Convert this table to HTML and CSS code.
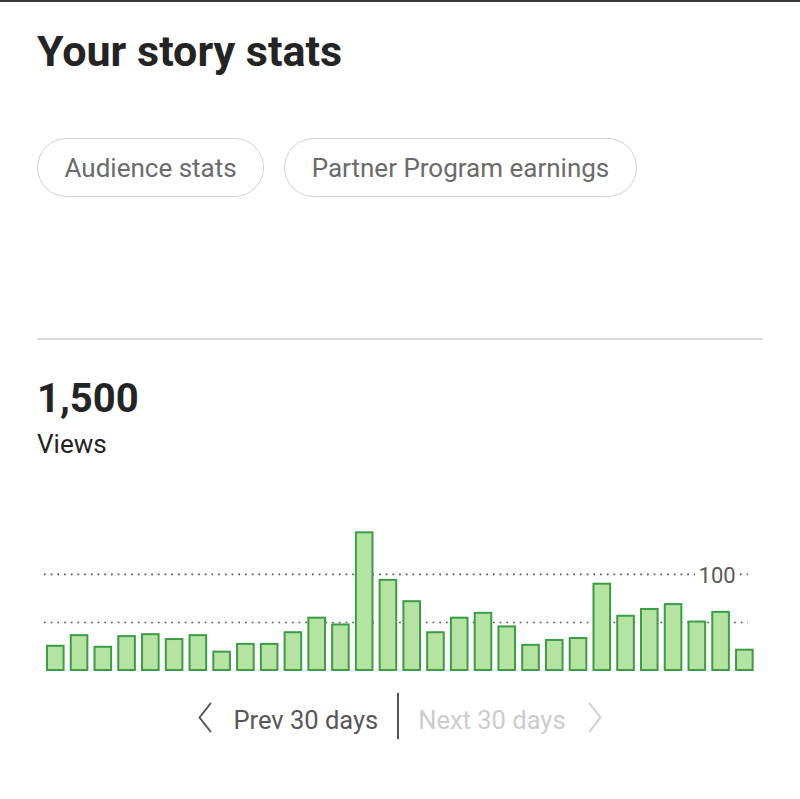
FILE: index.html
```html
<!DOCTYPE html>
<html lang="en">
<head>
<meta charset="utf-8">
<title>Your story stats</title>
<link rel="stylesheet" href="styles.css">
</head>
<body>
<div class="page">
  <h1 class="title">Your story stats</h1>
  <div class="pills">
    <button class="pill">Audience stats</button>
    <button class="pill">Partner Program earnings</button>
  </div>
  <hr class="divider">
  <div class="total">1,500</div>
  <div class="label">Views</div>
  <svg class="chart" width="726" height="156" viewBox="0 0 726 156">
    <line class="grid" x1="7" y1="102.5" x2="711" y2="102.5"/>
    <line class="grid" x1="7" y1="54.3" x2="658" y2="54.3"/>
    <line class="grid" x1="703" y1="54.3" x2="711" y2="54.3"/>
    <text class="axis-label" x="698.7" y="63.3" text-anchor="end">100</text>
    <g class="bars">
      <rect x="10" y="125.81" width="16.6" height="24.19"/>
      <rect x="33.76" y="115.14" width="16.6" height="34.86"/>
      <rect x="57.52" y="126.78" width="16.6" height="23.22"/>
      <rect x="81.28" y="116.11" width="16.6" height="33.89"/>
      <rect x="105.04" y="114.17" width="16.6" height="35.83"/>
      <rect x="128.8" y="119.02" width="16.6" height="30.98"/>
      <rect x="152.56" y="115.14" width="16.6" height="34.86"/>
      <rect x="176.32" y="131.63" width="16.6" height="18.37"/>
      <rect x="200.08" y="123.87" width="16.6" height="26.13"/>
      <rect x="223.84" y="123.87" width="16.6" height="26.13"/>
      <rect x="247.6" y="112.23" width="16.6" height="37.77"/>
      <rect x="271.36" y="97.68" width="16.6" height="52.32"/>
      <rect x="295.12" y="104.47" width="16.6" height="45.53"/>
      <rect x="318.88" y="12.32" width="16.6" height="137.68"/>
      <rect x="342.64" y="59.85" width="16.6" height="90.15"/>
      <rect x="366.4" y="81.19" width="16.6" height="68.81"/>
      <rect x="390.16" y="112.23" width="16.6" height="37.77"/>
      <rect x="413.92" y="97.68" width="16.6" height="52.32"/>
      <rect x="437.68" y="92.83" width="16.6" height="57.17"/>
      <rect x="461.44" y="106.41" width="16.6" height="43.59"/>
      <rect x="485.2" y="124.84" width="16.6" height="25.16"/>
      <rect x="508.96" y="119.99" width="16.6" height="30.01"/>
      <rect x="532.72" y="118.05" width="16.6" height="31.95"/>
      <rect x="556.48" y="63.73" width="16.6" height="86.27"/>
      <rect x="580.24" y="95.74" width="16.6" height="54.26"/>
      <rect x="604" y="88.95" width="16.6" height="61.05"/>
      <rect x="627.76" y="84.1" width="16.6" height="65.9"/>
      <rect x="651.52" y="101.56" width="16.6" height="48.44"/>
      <rect x="675.28" y="91.86" width="16.6" height="58.14"/>
      <rect x="699.04" y="129.69" width="16.6" height="20.31"/>
    </g>
  </svg>
  <nav class="pager">
    <a class="pager-link prev">
      <svg class="chev" width="14" height="31" viewBox="0 0 14 31"><polyline points="12.5,1.5 1.5,15.5 12.5,29.5"/></svg>
      <span>Prev 30 days</span>
    </a>
    <span class="pager-sep"></span>
    <a class="pager-link next">
      <span>Next 30 days</span>
      <svg class="chev" width="14" height="31" viewBox="0 0 14 31"><polyline points="1.5,1.5 12.5,15.5 1.5,29.5"/></svg>
    </a>
  </nav>
</div>
</body>
</html>
```

FILE: styles.css
```css
html, body {
  margin: 0;
  padding: 0;
  background: #ffffff;
}

body {
  font-family: Roboto, "Noto Sans", sans-serif;
  color: #242424;
  border-top: 2px solid #3a3a3a;
}

.page {
  padding: 0 37px;
  display: flex;
  flex-direction: column;
}

.title {
  margin: 24px 0 0;
  font-size: 43px;
  line-height: 50px;
  font-weight: 700;
  color: #242424;
}

.pills {
  display: flex;
  gap: 20px;
  margin-top: 62px;
}

.pill {
  height: 59px;
  box-sizing: border-box;
  padding: 0 26.5px;
  border: 1.5px solid #d2d2d2;
  border-radius: 30px;
  background: #fff;
  font-family: inherit;
  font-size: 26px;
  line-height: 36px;
  color: #6b6b6b;
  display: inline-flex;
  align-items: center;
}

.divider {
  margin: 141px 0 0;
  border: 0;
  height: 2px;
  background: #dadada;
  width: 100%;
}

.total {
  margin-top: 35px;
  font-size: 40px;
  line-height: 48px;
  font-weight: 700;
  color: #242424;
}

.label {
  margin-top: 5px;
  font-size: 26px;
  line-height: 32px;
  color: #242424;
}

.chart {
  display: block;
  margin-top: 60px;
}

.grid {
  stroke: #555;
  stroke-width: 1.7;
  stroke-dasharray: 1.7 5;
}

.axis-label {
  font-family: Roboto, sans-serif;
  font-size: 22px;
  fill: #5a5a5a;
}

.bars rect {
  fill: #b5e3a2;
  stroke: #3b9d45;
  stroke-width: 2;
}

.pager {
  margin-top: 17px;
  height: 46px;
  display: flex;
  justify-content: center;
  align-items: flex-start;
  gap: 19px;
}

.pager-link {
  display: flex;
  align-items: center;
  font-size: 25.5px;
  line-height: 46px;
  padding-top: 4px;
}

.pager-link.prev {
  gap: 21px;
  color: #575757;
}

.pager-link.next {
  gap: 22px;
  color: #cccccc;
}

.chev {
  margin-top: -6px;
}

.chev polyline {
  fill: none;
  stroke-width: 2;
  stroke-linecap: round;
  stroke-linejoin: round;
}

.prev .chev polyline {
  stroke: #555;
}

.next .chev polyline {
  stroke: #cdcdcd;
}

.pager-sep {
  align-self: stretch;
  width: 2px;
  background: #555;
}
```
